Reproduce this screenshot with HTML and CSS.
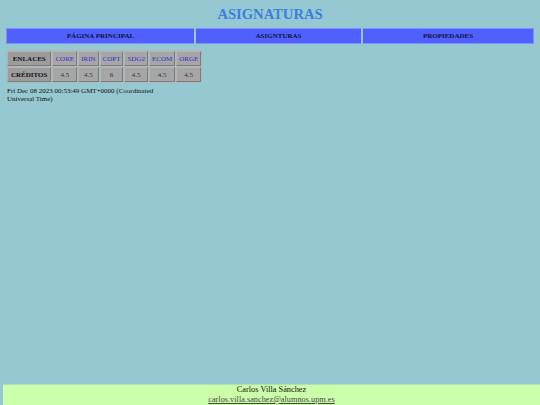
FILE: index.html
```html
<!DOCTYPE html>
<html lang="es">
<head>
<meta charset="utf-8">
<title>Asignaturas</title>
<link rel="stylesheet" href="styles.css">
</head>
<body>
<h1 class="title">ASIGNATURAS</h1>
<table class="nav">
<tr>
<td class="nav-cell nav-first">PÁGINA PRINCIPAL</td>
<td class="nav-cell nav-second">ASIGNTURAS</td>
<td class="nav-cell">PROPIEDADES</td>
</tr>
</table>
<table class="grid">
<tr>
<th class="head">ENLACES</th>
<td class="link">CORE</td>
<td class="link">IRIN</td>
<td class="link">COPT</td>
<td class="link">SDG2</td>
<td class="link">ECOM</td>
<td class="link">ORGE</td>
</tr>
<tr>
<th class="head">CRÉDITOS</th>
<td>4.5</td>
<td>4.5</td>
<td>6</td>
<td>4.5</td>
<td>4.5</td>
<td>4.5</td>
</tr>
</table>
<p class="date">Fri Dec 08 2023 00:53:49 GMT+0000 (Coordinated<br>Universal Time)</p>
<footer class="footer">
<div class="author">Carlos Villa Sánchez</div>
<a class="mail" href="#">carlos.villa.sanchez@alumnos.upm.es</a>
</footer>
</body>
</html>
```
FILE: styles.css
```css
html, body {
  margin: 0;
  padding: 0;
}
body {
  background: #96c8d2;
  font-family: "Liberation Serif", "Times New Roman", serif;
  color: #111;
  height: 405px;
  position: relative;
  overflow: hidden;
}
.title {
  margin: 0;
  padding-top: 6px;
  height: 21px;
  text-align: center;
  color: #3a7fe0;
  font-size: 14.6px;
  line-height: 17px;
  font-weight: bold;
}
.nav {
  width: 528px;
  margin: 1px 0 0 6px;
  border-collapse: collapse;
  table-layout: fixed;
}
.nav-cell {
  background: #5060ff;
  border: 1px solid #7f8ff4;
  height: 14px;
  padding: 0;
  text-align: center;
  font-weight: bold;
  font-size: 7px;
  color: #111133;
}
.nav-first { width: 187px; }
.nav-second { width: 165px; }
.nav-cell + .nav-cell { border-left: 2px solid #96c8d2; }
.grid {
  margin: 6px 0 0 6px;
  border-spacing: 1px;
  border: 0;
  font-size: 7px;
  background: #a9b9bd;
}
.grid th, .grid td {
  background: #a6a6a6;
  border: 1px solid;
  border-color: #b4b4b4 #7c7c7c #7c7c7c #b4b4b4;
  height: 13px;
  padding: 0 2px;
  text-align: center;
  color: #333;
}
.grid .head {
  background: #9c9c9c;
  font-weight: bold;
  padding: 0 3px;
  color: #111;
}
.grid .link { color: #3a2ed0; }
.date {
  margin: 4px 0 0 7px;
  font-size: 7px;
  line-height: 8px;
}
.footer {
  position: absolute;
  left: 3px;
  right: 0;
  bottom: 0;
  height: 20px;
  background: #ccffaa;
  border-top: 1px solid #b0e0b0;
  text-align: center;
  font-size: 8.3px;
  line-height: 10px;
  color: #111;
}
.mail { color: #444; }
```
